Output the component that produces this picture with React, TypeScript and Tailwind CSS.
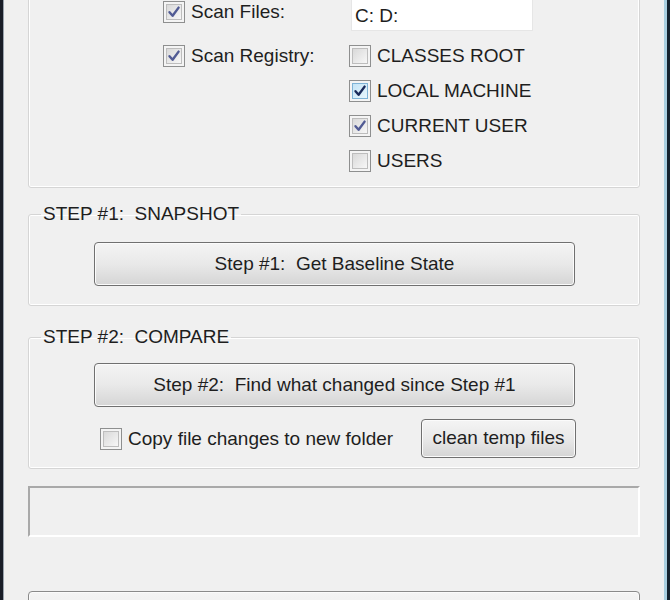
import React from "react";

const font = { fontFamily: '"Liberation Sans", Arial, sans-serif' };

function Check({ checked, focus }: { checked?: boolean; focus?: boolean }) {
  return (
    <div className="w-[22px] h-[22px] shrink-0 border border-[#8e8f8f] bg-[#f4f4f4] p-[2px]">
      <div
        className={
          focus
            ? "w-full h-full border border-[#7fb3d6] bg-gradient-to-br from-[#c4e4f6] to-[#e8f5fc] flex items-center justify-center"
            : "w-full h-full border border-[#bdbdbd] bg-gradient-to-br from-[#d9d9d9] to-[#f7f7f7] flex items-center justify-center"
        }
      >
        {checked && (
          <svg width="14" height="14" viewBox="0 0 14 14">
            <path
              d="M2.5 7.2 L5.6 10.8 L11.6 2.6"
              fill="none"
              stroke={focus ? "#1b2a5a" : "#515b94"}
              strokeWidth="2.4"
              strokeLinecap="round"
              strokeLinejoin="round"
            />
          </svg>
        )}
      </div>
    </div>
  );
}

function CheckRow({
  label,
  checked,
  focus,
  className,
}: {
  label: string;
  checked?: boolean;
  focus?: boolean;
  className?: string;
}) {
  return (
    <div className={"flex items-center gap-[6px] " + (className || "")}>
      <Check checked={checked} focus={focus} />
      <span className="text-[19px] leading-none text-[#1e1e1e] whitespace-pre">{label}</span>
    </div>
  );
}

function VButton({ children, className }: { children: React.ReactNode; className?: string }) {
  return (
    <div
      className={
        "flex items-center justify-center rounded-[4px] border border-[#707070] bg-gradient-to-b from-[#f4f4f4] via-[#e9e9e9] to-[#d5d5d5] shadow-[inset_0_0_0_1px_#fbfbfb] text-[19px] text-[#1e1e1e] whitespace-pre " +
        (className || "")
      }
    >
      {children}
    </div>
  );
}

export default function App() {
  return (
    <div className="w-[670px] h-[600px] overflow-hidden bg-[#f0f0f0] flex" style={font}>
      <div className="w-[3px] h-full bg-[#1a1e28] shrink-0" />
      <div className="w-[1px] h-full bg-[#9aa3ad] shrink-0" />
      <div className="flex-1 flex flex-col pl-[24px] pr-[24px]">
        {/* Top settings group (top cut off) */}
        <div className="-mt-[22px] h-[210px] shrink-0 border border-[#d5d5d5] rounded-[3px] shadow-[inset_0_0_0_1px_#ffffff] pt-[19px] flex">
          <div className="w-[320px] pl-[134px] flex flex-col shrink-0">
            <div className="h-[27px] flex items-center">
              <CheckRow label="Scan Files:" checked />
            </div>
            <div className="mt-[13px] h-[35px] flex items-center">
              <CheckRow label="Scan Registry:" checked />
            </div>
          </div>
          <div className="flex flex-col">
            <div className="h-[33px] w-[182px] ml-[2px] bg-white border border-[#e6e6e6] flex items-center pl-[3px] pt-[3px] text-[19px] text-[#1e1e1e]">
              C: D:
            </div>
            <div className="mt-[7px] h-[35px] flex items-center">
              <CheckRow label="CLASSES ROOT" />
            </div>
            <div className="h-[35px] flex items-center">
              <CheckRow label="LOCAL MACHINE" checked focus />
            </div>
            <div className="h-[35px] flex items-center">
              <CheckRow label="CURRENT USER" checked />
            </div>
            <div className="h-[35px] flex items-center">
              <CheckRow label="USERS" />
            </div>
          </div>
        </div>

        {/* Step 1 */}
        <fieldset className="mt-[15px] shrink-0 border border-[#d5d5d5] rounded-[3px] shadow-[inset_0_0_0_1px_#ffffff]">
          <legend className="ml-[12px] px-[2px] text-[19px] leading-[22px] text-[#1e1e1e] whitespace-pre">
            STEP #1:  SNAPSHOT
          </legend>
          <div className="pl-[65px] pt-[17px] pb-[19px]">
            <VButton className="w-[481px] h-[44px]">Step #1:  Get Baseline State</VButton>
          </div>
        </fieldset>

        {/* Step 2 */}
        <fieldset className="mt-[20px] shrink-0 border border-[#d5d5d5] rounded-[3px] shadow-[inset_0_0_0_1px_#ffffff]">
          <legend className="ml-[12px] px-[2px] text-[19px] leading-[22px] text-[#1e1e1e] whitespace-pre">
            STEP #2:  COMPARE
          </legend>
          <div className="pl-[65px] pt-[15px] pb-[10px]">
            <VButton className="w-[481px] h-[44px]">Step #2:  Find what changed since Step #1</VButton>
            <div className="mt-[12px] w-[482px] h-[39px] flex items-center justify-between pl-[6px]">
              <CheckRow label="Copy file changes to new folder" />
              <VButton className="w-[155px] h-[39px]">clean temp files</VButton>
            </div>
          </div>
        </fieldset>

        {/* Status */}
        <div className="mt-[17px] h-[51px] shrink-0 border-t-2 border-l-2 border-t-[#a9a9a9] border-l-[#a9a9a9] border-b-2 border-r-2 border-b-white border-r-white" />

        {/* Bottom button (cut off) */}
        <div className="mt-[54px] h-[40px] shrink-0 rounded-[4px] border border-[#8a8a8a] bg-gradient-to-b from-[#f4f4f4] to-[#e9e9e9] shadow-[inset_0_0_0_1px_#fbfbfb]" />
      </div>
      <div className="w-[3px] h-full bg-[#a9cfe0] shrink-0" />
      <div className="w-[3px] h-full bg-[#15222e] shrink-0" />
    </div>
  );
}
